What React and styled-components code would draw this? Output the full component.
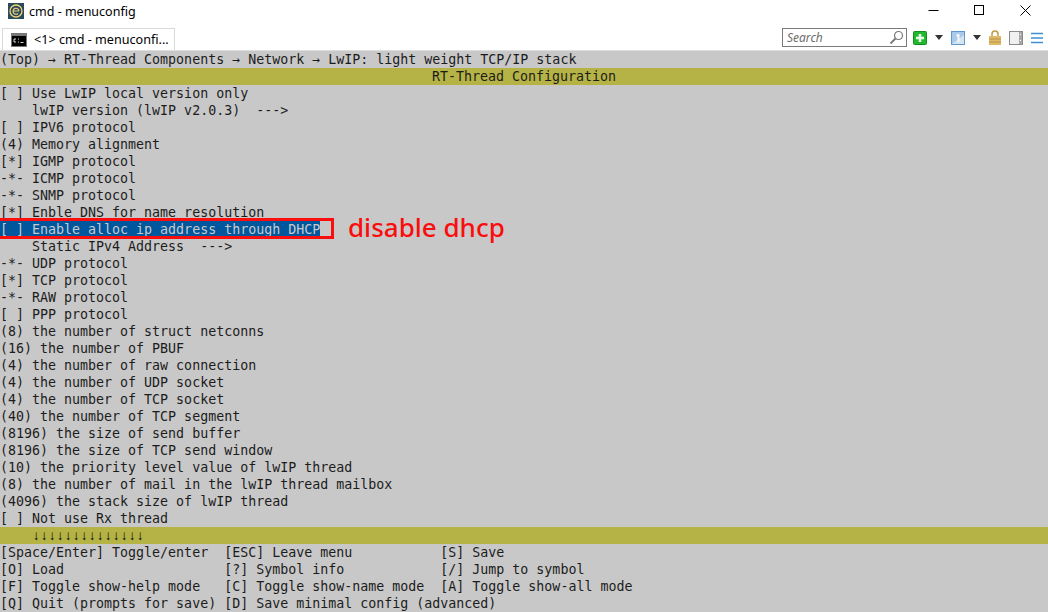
import styled, { createGlobalStyle } from "styled-components";

const GlobalStyle = createGlobalStyle`
  html, body {
    margin: 0;
    padding: 0;
    background: #fff;
    overflow: hidden;
  }
`;

const Window = styled.div`
  width: 1048px;
  height: 612px;
  display: flex;
  flex-direction: column;
  font-family: "Noto Sans", "Liberation Sans", sans-serif;
`;

const TitleBar = styled.div`
  height: 22px;
  display: flex;
  align-items: center;
  padding-left: 8px;
  font-size: 12.5px;
  color: #000;
`;

const Caption = styled.span`
  flex: 1;
  margin-left: 5px;
`;

const WinButton = styled.div`
  width: 46px;
  height: 22px;
  display: flex;
  align-items: center;
  justify-content: center;
  margin-top: -1px;
`;

const TabBar = styled.div`
  height: 28px;
  display: flex;
  align-items: flex-end;
  padding-left: 2px;
`;

const Tab = styled.div`
  width: 173px;
  height: 22px;
  box-sizing: border-box;
  border: 1px solid #d9d9d9;
  border-bottom: none;
  display: flex;
  align-items: center;
  gap: 7px;
  padding-left: 8px;
  font-size: 12.6px;
  white-space: nowrap;
`;

const Tools = styled.div`
  margin-left: auto;
  height: 100%;
  display: flex;
  align-items: center;
  padding-top: 3px;
  box-sizing: border-box;
`;

const SearchBox = styled.div`
  width: 125px;
  height: 19px;
  box-sizing: border-box;
  border: 1px solid #7a7a7a;
  margin-right: 6px;
  padding: 0 2px 0 4px;
  display: flex;
  align-items: center;
  justify-content: space-between;
  font-size: 12px;
  font-style: italic;
  color: #6d6d6d;
`;

const ToolIcon = styled.svg`
  display: block;
  margin-right: ${(p) => p.$gap || 0}px;
`;

const Terminal = styled.div`
  flex: 1;
  background: #c8c8c8;
  border-top: 1px solid #dedede;
  font-family: "DejaVu Sans Mono", "Liberation Mono", monospace;
  font-size: 13.3px;
  color: #1c1c1c;
  position: relative;
  overflow: hidden;
`;

const Line = styled.div`
  height: 17px;
  line-height: 17px;
  white-space: pre;
  width: ${(p) => (p.$selected ? "320px" : "auto")};
  background: ${(p) => (p.$selected ? "#00579e" : "transparent")};
  color: ${(p) => (p.$selected ? "#c8c8c8" : "inherit")};
`;

const Band = styled(Line)`
  background: #b5b345;
  text-align: ${(p) => (p.$center ? "center" : "left")};
`;

const Arrows = styled.span`
  font-family: "Liberation Mono", monospace;
  font-size: 13.33px;
  font-weight: 700;
  color: #000;
`;

const Annotation = styled.div`
  position: absolute;
  left: -3px;
  top: 167px;
  width: 337px;
  height: 21px;
  box-sizing: border-box;
  border: 3px solid #fa0d0d;
`;

const AnnotationText = styled.div`
  position: absolute;
  left: 348px;
  top: 160px;
  font-family: "Noto Sans", sans-serif;
  font-size: 26px;
  font-weight: 500;
  line-height: 32px;
  color: #fa0d0d;
  white-space: pre;
`;

const items = [
  "[ ] Use LwIP local version only",
  "    lwIP version (lwIP v2.0.3)  --->",
  "[ ] IPV6 protocol",
  "(4) Memory alignment",
  "[*] IGMP protocol",
  "-*- ICMP protocol",
  "-*- SNMP protocol",
  "[*] Enble DNS for name resolution",
  "[ ] Enable alloc ip address through DHCP",
  "    Static IPv4 Address  --->",
  "-*- UDP protocol",
  "[*] TCP protocol",
  "-*- RAW protocol",
  "[ ] PPP protocol",
  "(8) the number of struct netconns",
  "(16) the number of PBUF",
  "(4) the number of raw connection",
  "(4) the number of UDP socket",
  "(4) the number of TCP socket",
  "(40) the number of TCP segment",
  "(8196) the size of send buffer",
  "(8196) the size of TCP send window",
  "(10) the priority level value of lwIP thread",
  "(8) the number of mail in the lwIP thread mailbox",
  "(4096) the stack size of lwIP thread",
  "[ ] Not use Rx thread",
];

const footer = [
  "[Space/Enter] Toggle/enter  [ESC] Leave menu           [S] Save",
  "[O] Load                    [?] Symbol info            [/] Jump to symbol",
  "[F] Toggle show-help mode   [C] Toggle show-name mode  [A] Toggle show-all mode",
  "[Q] Quit (prompts for save) [D] Save minimal config (advanced)",
];

const AppLogo = () => (
  <svg width="16" height="16" viewBox="0 0 16 16">
    <rect width="16" height="16" fill="#2b4a5c" />
    <circle cx="8" cy="8" r="6" fill="none" stroke="#efd27a" strokeWidth="1.3" />
    <path d="M5.5 8h5.5M11 8a3 3 0 1 0-1 2.5" fill="none" stroke="#efd27a" strokeWidth="1.2" />
  </svg>
);

const CmdIcon = () => (
  <svg width="16" height="14" viewBox="0 0 16 14">
    <rect width="16" height="14" fill="#777" />
    <rect x="1" y="3" width="14" height="10" fill="#000" />
    <path d="M3 6h2M3 6v3h2M7 6h1M7 9h1M9.5 9.5h3" stroke="#ddd" fill="none" />
  </svg>
);

const App = () => {
  return (
    <Window>
      <GlobalStyle />
      <TitleBar>
        <AppLogo />
        <Caption>cmd - menuconfig</Caption>
        <WinButton>
          <svg width="11" height="11" viewBox="0 0 11 11">
            <path d="M0.5 5.5h10" stroke="#000" />
          </svg>
        </WinButton>
        <WinButton>
          <svg width="11" height="11" viewBox="0 0 11 11">
            <rect x="0.5" y="0.5" width="9" height="9" fill="none" stroke="#000" />
          </svg>
        </WinButton>
        <WinButton>
          <svg width="11" height="11" viewBox="0 0 11 11">
            <path d="M0.5 0.5l10 10M10.5 0.5l-10 10" stroke="#000" />
          </svg>
        </WinButton>
      </TitleBar>
      <TabBar>
        <Tab>
          <CmdIcon />
          &lt;1&gt; cmd - menuconfi...
        </Tab>
        <Tools>
          <SearchBox>
            Search
            <svg width="15" height="15" viewBox="0 0 15 15">
              <circle cx="9.5" cy="5.5" r="4" fill="none" stroke="#777" strokeWidth="1.2" />
              <path d="M6.5 8.5L1.5 13.5" stroke="#777" strokeWidth="1.8" />
            </svg>
          </SearchBox>
          <ToolIcon width="14" height="14" viewBox="0 0 14 14" $gap={8}>
            <rect x="0.5" y="0.5" width="13" height="13" rx="1" fill="#22b82f" stroke="#158a20" />
            <path d="M7 3v8M3 7h8" stroke="#e8ffe8" strokeWidth="2.6" />
          </ToolIcon>
          <ToolIcon width="8" height="5" viewBox="0 0 8 5" $gap={8}>
            <path d="M0 0h8L4 5z" fill="#333" />
          </ToolIcon>
          <ToolIcon width="14" height="14" viewBox="0 0 14 14" $gap={8}>
            <rect x="0.5" y="0.5" width="13" height="13" fill="#a9c9ea" stroke="#5f97cf" />
            <path d="M1 13L13 4v9z" fill="#d6e4f2" />
            <path d="M7.5 3v8M7.5 3.5L5.5 5" stroke="#f4f8fc" strokeWidth="2" fill="none" />
          </ToolIcon>
          <ToolIcon width="8" height="5" viewBox="0 0 8 5" $gap={8}>
            <path d="M0 0h8L4 5z" fill="#333" />
          </ToolIcon>
          <ToolIcon width="12" height="15" viewBox="0 0 12 15" $gap={8}>
            <path d="M3 7V4a3 3 0 0 1 6 0v3" fill="none" stroke="#c29a45" strokeWidth="1.5" />
            <rect y="6" width="12" height="9" fill="#e0ba66" />
            <path d="M0 9h12M0 12h12" stroke="#b8934a" />
          </ToolIcon>
          <ToolIcon width="14" height="14" viewBox="0 0 14 14" $gap={8}>
            <rect x="0.5" y="0.5" width="13" height="13" fill="#f0f0f0" stroke="#8a8a8a" />
            <rect x="10" y="1" width="3" height="12" fill="#a8a8a8" />
            <path d="M11.5 3v1M11.5 9v1" stroke="#fff" />
          </ToolIcon>
          <ToolIcon width="12" height="12" viewBox="0 0 12 12" $gap={5}>
            <path d="M0 1.5h12M0 6h12M0 10.5h12" stroke="#3f8fd0" strokeWidth="1.6" />
          </ToolIcon>
        </Tools>
      </TabBar>
      <Terminal>
        <Line>(Top) → RT-Thread Components → Network → LwIP: light weight TCP/IP stack</Line>
        <Band $center>RT-Thread Configuration</Band>
        {items.map((text, i) => (
          <Line key={i} $selected={i === 8}>
            {text}
          </Line>
        ))}
        <Band>
          {"    "}
          <Arrows>↓↓↓↓↓↓↓↓↓↓↓↓↓↓</Arrows>
        </Band>
        {footer.map((text, i) => (
          <Line key={i}>{text}</Line>
        ))}
        <Annotation />
        <AnnotationText>disable dhcp</AnnotationText>
      </Terminal>
    </Window>
  );
};

export default App;
